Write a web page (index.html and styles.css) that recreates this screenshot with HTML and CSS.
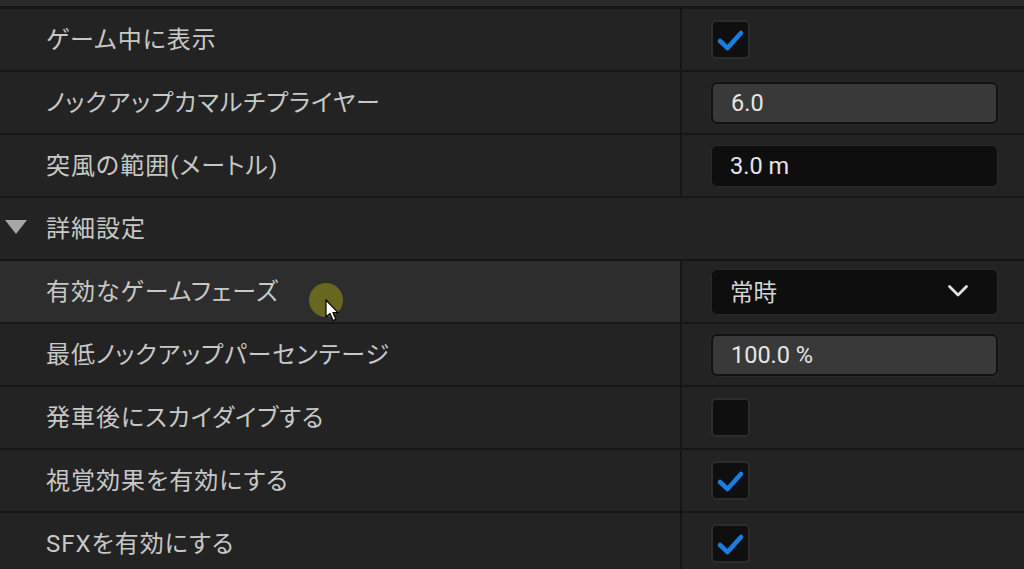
FILE: index.html
```html
<!DOCTYPE html>
<html lang="ja">
<head>
<meta charset="utf-8">
<link rel="stylesheet" href="styles.css">
</head>
<body>
<div class="panel">
  <div class="topstrip"></div>

  <div class="row">
    <div class="label">ゲーム中に表示</div>
    <div class="value"><span class="check on"><svg viewBox="0 0 39 39"><path d="M9 21 L16.5 28 L30 13"/></svg></span></div>
  </div>

  <div class="row">
    <div class="label">ノックアップカマルチプライヤー</div>
    <div class="value"><div class="field light">6.0</div></div>
  </div>

  <div class="row">
    <div class="label">突風の範囲(メートル)</div>
    <div class="value"><div class="field dark">3.0 m</div></div>
  </div>

  <div class="row header">
    <div class="label"><span class="tri"></span>詳細設定</div>
  </div>

  <div class="row hover">
    <div class="label">有効なゲームフェーズ</div>
    <div class="value">
      <div class="field dark select">常時
        <svg class="chev" viewBox="0 0 22 14"><polyline points="2.5,2.5 11,11 19.5,2.5"/></svg>
      </div>
    </div>
  </div>

  <div class="row">
    <div class="label">最低ノックアップパーセンテージ</div>
    <div class="value"><div class="field light">100.0 %</div></div>
  </div>

  <div class="row">
    <div class="label">発車後にスカイダイブする</div>
    <div class="value"><span class="check"></span></div>
  </div>

  <div class="row">
    <div class="label">視覚効果を有効にする</div>
    <div class="value"><span class="check on"><svg viewBox="0 0 39 39"><path d="M9 21 L16.5 28 L30 13"/></svg></span></div>
  </div>

  <div class="row">
    <div class="label">SFXを有効にする</div>
    <div class="value"><span class="check on"><svg viewBox="0 0 39 39"><path d="M9 21 L16.5 28 L30 13"/></svg></span></div>
  </div>

  <div class="cursor">
    <span class="ring"></span>
    <svg class="arrow" viewBox="0 0 16 24"><path d="M1 1 L1 18 L5 14.5 L8 21.5 L10.8 20.3 L7.9 13.6 L13 13.6 Z"/></svg>
  </div>
</div>
</body>
</html>
```

FILE: styles.css
```css
* { box-sizing: border-box; }
html, body {
  margin: 0;
  padding: 0;
  background: #232323;
  overflow: hidden;
}
.panel {
  position: relative;
  width: 1024px;
  height: 569px;
  font-family: Roboto, "Noto Sans CJK JP", sans-serif;
  color: #c8c8c8;
}
.topstrip {
  height: 9px;
  background: #2a2a2a;
  border-bottom: 3px solid #161616;
}
.row {
  display: flex;
  height: 63px;
  border-bottom: 2px solid #161616;
  background: #232323;
}
.label {
  width: 682px;
  flex: none;
  display: flex;
  align-items: center;
  padding-left: 46px;
  padding-bottom: 5px;
  font-size: 24px;
  font-feature-settings: "palt";
  letter-spacing: 1px;
  border-right: 2px solid #161616;
  white-space: nowrap;
}
.header .label {
  border-right: none;
  width: 100%;
  position: relative;
}
.tri {
  position: absolute;
  left: 5px;
  top: 22px;
  width: 0;
  height: 0;
  border-left: 11px solid transparent;
  border-right: 11px solid transparent;
  border-top: 14px solid #a6a6a6;
}
.hover .label { background: #2d2d2d; }
.value {
  flex: 1;
  display: flex;
  align-items: center;
  padding-left: 29px;
}
.check {
  width: 39px;
  height: 39px;
  background: #0f0f0f;
  border: 2px solid #2c2c2c;
  border-radius: 5px;
  display: block;
}
.check svg {
  display: block;
  width: 39px;
  height: 39px;
  margin: -2px;
}
.check path {
  fill: none;
  stroke: #1a7de0;
  stroke-width: 4.6;
  stroke-linecap: round;
  stroke-linejoin: round;
}
.field {
  width: 287px;
  height: 42px;
  border-radius: 6px;
  display: flex;
  align-items: center;
  padding-left: 18px;
  font-size: 23.5px;
  color: #e6e6e6;
}
.field.light {
  background: #393939;
  border: 2px solid #111;
  box-shadow: 0 0 0 1px #2a2a2a;
}
.field.dark {
  background: #0e0e0e;
  border: 1px solid #2a2a2a;
}
.field.select {
  height: 46px;
  justify-content: space-between;
  padding-right: 28px;
  padding-bottom: 2px;
  color: #d4d4d4;
}
.chev {
  width: 22px;
  height: 14px;
}
.chev polyline {
  fill: none;
  stroke: #e0e0e0;
  stroke-width: 2.8;
  stroke-linecap: round;
  stroke-linejoin: round;
}
.cursor {
  position: absolute;
  left: 309px;
  top: 283px;
  width: 40px;
  height: 44px;
}
.ring {
  position: absolute;
  left: 0;
  top: 0;
  width: 34px;
  height: 34px;
  border-radius: 50%;
  background: #67671f;
}
.arrow {
  position: absolute;
  left: 16px;
  top: 16px;
  width: 16px;
  height: 24px;
}
.arrow path {
  fill: #ffffff;
  stroke: #000;
  stroke-width: 1.2;
  stroke-linejoin: round;
}
```
